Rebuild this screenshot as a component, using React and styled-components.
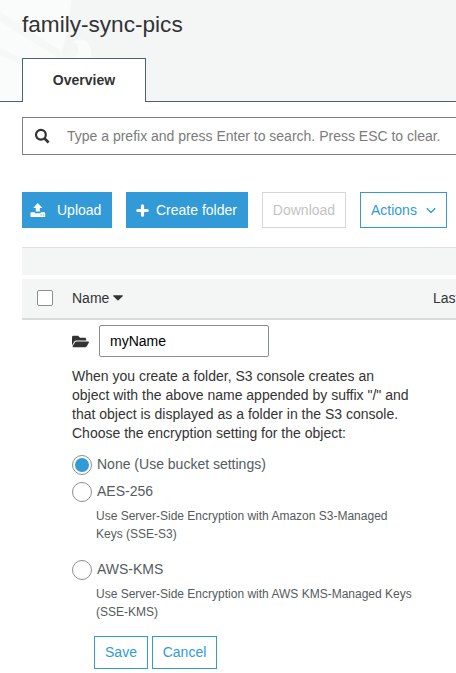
import React from "react";
import styled, { createGlobalStyle, css } from "styled-components";
import { FaFolderOpen } from "react-icons/fa";

const GlobalStyle = createGlobalStyle`
  * { box-sizing: border-box; }
  html, body { margin: 0; background: #fff; overflow: hidden; }
  body, button, input { font-family: "Liberation Sans", Arial, sans-serif; font-size: 14px; }
`;

const Page = styled.div`
  width: 100%;
  height: 673px;
  overflow: hidden;
  color: #333;
`;

const Header = styled.header`
  position: relative;
  display: flex;
  flex-direction: column;
  justify-content: space-between;
  height: 102px;
  padding: 9px 0 0 22px;
  background: #f4f6f6;
  border-bottom: 1px solid #4c626f;
`;

const Watermark = styled.svg`
  position: absolute;
  left: 0;
  top: 0;
`;

const Title = styled.h1`
  position: relative;
  margin: 0;
  font-size: 22.6px;
  line-height: 32px;
  font-weight: 400;
`;

const Tab = styled.div`
  position: relative;
  width: 124px;
  height: 44px;
  margin-bottom: -1px;
  border: 1px solid #4c626f;
  border-bottom: 0;
  background: #fff;
  font-weight: 700;
  line-height: 42px;
  text-align: center;
`;

const Content = styled.main`
  width: 700px;
  padding: 15px 0 0 22px;
`;

const SearchBox = styled.label`
  display: flex;
  align-items: center;
  gap: 17px;
  height: 38px;
  padding-left: 11px;
  border: 1px solid #7d7f80;
`;

const SearchInput = styled.input`
  width: 400px;
  padding: 0;
  border: 0;
  outline: 0;
  &::placeholder { color: #7b7b7b; opacity: 1; }
`;

const Toolbar = styled.div`
  display: flex;
  gap: 14px;
  margin-top: 37px;
`;

const variants = {
  primary: css`background: #329ad6; border-color: #329ad6; color: #fff;`,
  disabled: css`background: #fff; border-color: #d5d7d7; color: #c2c4c4;`,
  outline: css`background: #fff; border-color: #329ad6; color: #329ad6;`,
};

const Button = styled.button`
  display: flex;
  align-items: center;
  justify-content: ${(p) => (p.$start ? "flex-start" : "center")};
  gap: ${(p) => p.$gap || 0}px;
  width: ${(p) => p.$width}px;
  height: ${(p) => p.$height || 36}px;
  padding: 0 ${(p) => (p.$start ? p.$start : 0)}px;
  border: 1px solid;
  white-space: nowrap;
  ${(p) => variants[p.$variant]}
`;

const FormButton = styled(Button)`
  height: 33px;
  padding-bottom: 2px;
`;

const Band = styled.div`
  height: 28px;
  margin-top: 19px;
  border-top: 1px solid #e0e2e2;
  background: #f4f6f6;
`;

const TableHead = styled.div`
  display: grid;
  grid-template-columns: 50px 361px 1fr;
  align-items: center;
  height: 41px;
  margin-top: 4px;
  border-bottom: 2px solid #d9dbdb;
  background: #f4f6f6;
`;

const Checkbox = styled.span`
  width: 16px;
  height: 16px;
  margin: 0 0 1px 15px;
  border: 1px solid #879090;
  border-radius: 2px;
  background: #fff;
`;

const HeadCell = styled.span`
  display: flex;
  align-items: center;
  gap: 4px;
  padding-bottom: 2px;
  white-space: nowrap;
`;

const FolderForm = styled.form`
  width: 345px;
  margin-left: 50px;
  padding-top: 5px;
`;

const NameRow = styled.div`
  display: flex;
  align-items: center;
  gap: 10px;
`;

const NameInput = styled.input`
  width: 170px;
  height: 32px;
  padding: 0 10px;
  border: 1px solid #879090;
  border-radius: 2px;
  outline: 0;
  color: #000;
`;

const Explanation = styled.p`
  margin: 10px 0 12px;
  line-height: 19px;
  white-space: nowrap;
`;

const Option = styled.label`
  display: flex;
  gap: 5px;
  height: 20px;
  margin-top: ${(p) => p.$top || 0}px;
  color: #545b5e;
  line-height: 18px;
`;

const Radio = styled.span`
  display: flex;
  align-items: center;
  justify-content: center;
  width: 20px;
  height: 20px;
  border: 1px solid #879090;
  border-radius: 50%;
  &::after {
    content: "";
    width: 14px;
    height: 14px;
    border-radius: 50%;
    background: ${(p) => (p.$checked ? "#329ad6" : "transparent")};
  }
`;

const Hint = styled.p`
  margin: 5px 0 0 24px;
  color: #545b5e;
  font-size: 12px;
  line-height: 18px;
  white-space: nowrap;
`;

const FormActions = styled.div`
  display: flex;
  gap: 4px;
  margin: 15px 0 0 22px;
`;

const SearchIcon = () => (
  <svg width="16" height="16" viewBox="0 0 16 16" fill="none" stroke="#333">
    <circle cx="6.9" cy="6.8" r="4.9" strokeWidth="2.2" />
    <path d="M10.6 10.5 14.6 14.5" strokeWidth="2.6" />
  </svg>
);

const UploadIcon = () => (
  <svg width="16" height="15" viewBox="0 0 16 15" fill="#fff">
    <path d="M7.8 0 12.4 5H9.8V8.6H5.8V5H3.2Z" />
    <path d="M1 9.2H4.9V10.3H10.7V9.2H14.5L15.2 10V14H.5V10Z" />
    <path d="M10.7 11.6h1v1h-1zM12.8 11.6h1v1h-1z" fill="#329ad6" />
  </svg>
);

const PlusIcon = () => (
  <svg width="13" height="13" viewBox="0 0 13 13" fill="none" stroke="#fff" strokeWidth="3.2" strokeLinecap="round">
    <path d="M6.5 1.8V11.2M1.8 6.5H11.2" />
  </svg>
);

const ChevronIcon = () => (
  <svg width="10" height="7" viewBox="0 0 10 7" fill="none" stroke="#329ad6" strokeWidth="1.4">
    <path d="M.8 1.3 5 5.4 9.2 1.3" />
  </svg>
);

const CaretIcon = () => (
  <svg width="10" height="6" viewBox="0 0 10 6" fill="#333">
    <path d="M.6.3H9.4Q10.2.5 9.6 1.2L5.5 5.3Q5 5.7 4.5 5.3L.4 1.2Q-.2.5.6.3Z" />
  </svg>
);

export default function App() {
  return (
    <Page>
      <GlobalStyle />
      <Header>
        <Watermark width="110" height="101" viewBox="0 0 110 101">
          <path d="M0 0H71Q69 26 62 52L68 57Q80 58 78 47Q77 41 72 43Q79 36 87 42Q93 49 91 60H22V101H0Z" fill="#fafcfc" />
          <path d="M0 12 64 53 71 50 78 52 74 58H58L0 21ZM0 48 22 59V65L0 55Z" fill="#f6f8f8" />
        </Watermark>
        <Title>family-sync-pics</Title>
        <Tab>Overview</Tab>
      </Header>
      <Content>
        <SearchBox>
          <SearchIcon />
          <SearchInput placeholder="Type a prefix and press Enter to search. Press ESC to clear." />
        </SearchBox>
        <Toolbar>
          <Button $variant="primary" $width={90} $start={7} $gap={11}><UploadIcon />Upload</Button>
          <Button $variant="primary" $width={122} $start={9} $gap={7}><PlusIcon />Create folder</Button>
          <Button $variant="disabled" $width={84}>Download</Button>
          <Button $variant="outline" $width={87} $start={10} $gap={9}>Actions<ChevronIcon /></Button>
        </Toolbar>
        <Band />
        <TableHead>
          <Checkbox />
          <HeadCell>Name<CaretIcon /></HeadCell>
          <HeadCell>Last</HeadCell>
        </TableHead>
        <FolderForm>
          <NameRow>
            <FaFolderOpen size={17} />
            <NameInput defaultValue="myName" />
          </NameRow>
          <Explanation>
            When you create a folder, S3 console creates an<br />
            object with the above name appended by suffix "/" and<br />
            that object is displayed as a folder in the S3 console.<br />
            Choose the encryption setting for the object:
          </Explanation>
          <Option><Radio $checked />None (Use bucket settings)</Option>
          <Option $top={7}><Radio />AES-256</Option>
          <Hint>Use Server-Side Encryption with Amazon S3-Managed<br />Keys (SSE-S3)</Hint>
          <Option $top={17}><Radio />AWS-KMS</Option>
          <Hint>Use Server-Side Encryption with AWS KMS-Managed Keys<br />(SSE-KMS)</Hint>
          <FormActions>
            <FormButton type="button" $variant="outline" $width={54}>Save</FormButton>
            <FormButton type="button" $variant="outline" $width={65}>Cancel</FormButton>
          </FormActions>
        </FolderForm>
      </Content>
    </Page>
  );
}
